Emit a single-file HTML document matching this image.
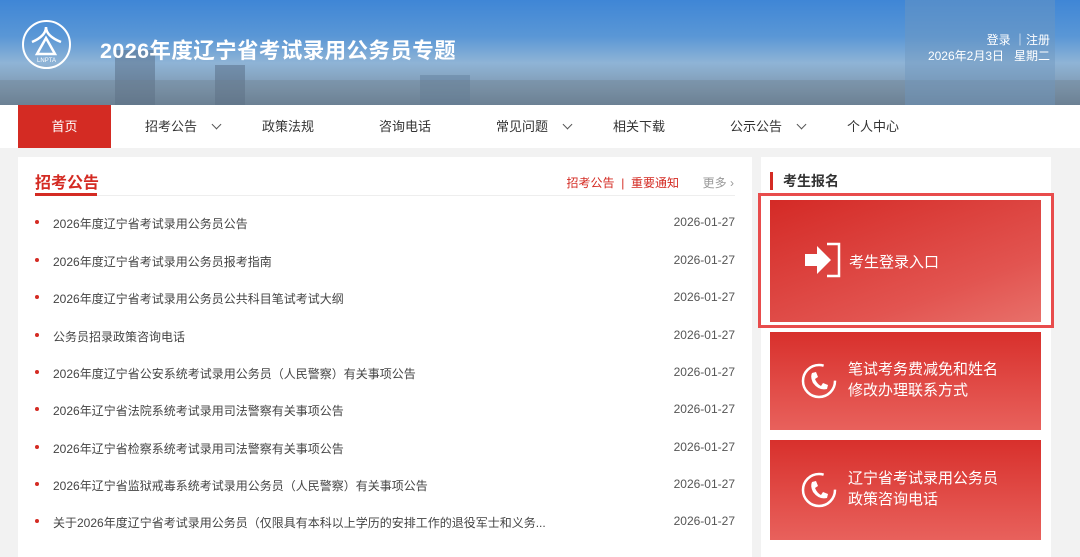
<!DOCTYPE html>
<html><head><meta charset="utf-8"><style>
*{margin:0;padding:0;box-sizing:border-box}
body{width:1080px;height:546px;overflow:hidden;background:#f2f2f2;font-family:"Liberation Sans","Noto Sans CJK SC",sans-serif;position:relative}
.hdr{position:absolute;left:0;top:0;width:1080px;height:105px;background:linear-gradient(180deg,#3f86d6 0%,#5a97d6 35%,#8fb4d6 60%,#7e98b0 85%,#6b8298 100%);overflow:hidden}
.bld{position:absolute;bottom:0;background:rgba(80,100,125,.45)}
.title{position:absolute;left:100px;top:34px;color:#fff;font-size:21.5px;font-weight:bold;letter-spacing:.4px}
.logo{position:absolute;left:22px;top:20px;width:49px;height:49px;border:2px solid #fff;border-radius:50%}
.tr{position:absolute;right:30px;color:#fff;font-size:12px}
.nav{position:absolute;left:0;top:105px;width:1080px;height:43px;background:#fff}
.nav div{position:absolute;top:0;height:43px;line-height:43px;font-size:13px;color:#333}
.nav .on{left:18px;width:93px;background:#d42b23;color:#fff;text-align:center}
.chev{display:inline-block;width:7px;height:7px;border-right:1px solid #555;border-bottom:1px solid #555;transform:rotate(45deg);margin-left:16px;position:relative;top:-3px}
.left{position:absolute;left:18px;top:157px;width:734px;height:400px;background:#fff}
.lt{position:absolute;left:17px;top:12px;font-size:16px;font-weight:bold;color:#d42b23}
.ul{position:absolute;left:17px;top:38px;width:700px;height:1px;background:#eee}
.ulr{position:absolute;left:17px;top:36px;width:62px;height:3px;background:#d42b23}
.links{position:absolute;right:73px;top:17px;font-size:12px;color:#d42b23}
.more{position:absolute;right:18px;top:17px;font-size:12px;color:#999}
.row{position:absolute;left:0;width:734px;font-size:12px;color:#444}
.row .d{position:absolute;left:17px;top:3px;width:4px;height:4px;border-radius:50%;background:#d42b23}
.row .t{position:absolute;left:35px;top:-2px}
.row .dt{position:absolute;right:17px;top:-2px;color:#555}
.right{position:absolute;left:761px;top:157px;width:290px;height:400px;background:#fff}
.rt{position:absolute;left:9px;top:15px;border-left:3px solid #d42b23;padding-left:10px;font-size:14px;font-weight:bold;color:#333;height:18px;line-height:18px}
.card{position:absolute;left:9px;width:271px;background:linear-gradient(180deg,#d8302c,#e8615c);color:#fff;font-size:15px;line-height:21px}
.ol{position:absolute;left:-3px;top:36px;width:296px;height:135px;border:3px solid #e84c4c}
</style></head><body>
<div class="hdr">
<div class="bld" style="left:115px;width:40px;height:55px"></div>
<div class="bld" style="left:215px;width:30px;height:40px"></div>
<div class="bld" style="left:420px;width:50px;height:30px;background:rgba(90,120,150,.4)"></div>
<div class="bld" style="left:0;width:1080px;height:25px;background:rgba(110,125,140,.35)"></div>
<div class="bld" style="left:905px;width:150px;height:105px;background:rgba(110,150,190,.45)"></div>
<div class="logo"><svg width="45" height="45" viewBox="0 0 45 45"><path d="M8 20 Q22 14 22 5 Q22 14 37 20" stroke="#fff" stroke-width="2.5" fill="none"/><path d="M13 32 L22 16 L31 32 Z" stroke="#fff" stroke-width="2.5" fill="none"/><text x="22.5" y="40" font-size="6" fill="#fff" text-anchor="middle" font-family="Liberation Sans">LNPTA</text></svg></div>
<div class="title">2026年度辽宁省考试录用公务员专题</div>
<div class="tr" style="top:31px">登录 ｜注册</div>
<div class="tr" style="top:47px">2026年2月3日&nbsp;&nbsp;&nbsp;星期二</div>
</div>
<div class="nav">
<div class="on">首页</div>
<div style="left:145px">招考公告<span class="chev"></span></div>
<div style="left:262px">政策法规</div>
<div style="left:379px">咨询电话</div>
<div style="left:496px">常见问题<span class="chev"></span></div>
<div style="left:613px">相关下载</div>
<div style="left:730px">公示公告<span class="chev"></span></div>
<div style="left:847px">个人中心</div>
</div>
<div class="left">
<div class="lt">招考公告</div><div class="ul"></div><div class="ulr"></div>
<div class="links">招考公告 &nbsp;|&nbsp; 重要通知</div>
<div class="more">更多 ›</div>
<div class="row" style="top:60px"><span class="d"></span><span class="t">2026年度辽宁省考试录用公务员公告</span><span class="dt">2026-01-27</span></div>
<div class="row" style="top:98px"><span class="d"></span><span class="t">2026年度辽宁省考试录用公务员报考指南</span><span class="dt">2026-01-27</span></div>
<div class="row" style="top:135px"><span class="d"></span><span class="t">2026年度辽宁省考试录用公务员公共科目笔试考试大纲</span><span class="dt">2026-01-27</span></div>
<div class="row" style="top:173px"><span class="d"></span><span class="t">公务员招录政策咨询电话</span><span class="dt">2026-01-27</span></div>
<div class="row" style="top:210px"><span class="d"></span><span class="t">2026年度辽宁省公安系统考试录用公务员（人民警察）有关事项公告</span><span class="dt">2026-01-27</span></div>
<div class="row" style="top:247px"><span class="d"></span><span class="t">2026年辽宁省法院系统考试录用司法警察有关事项公告</span><span class="dt">2026-01-27</span></div>
<div class="row" style="top:285px"><span class="d"></span><span class="t">2026年辽宁省检察系统考试录用司法警察有关事项公告</span><span class="dt">2026-01-27</span></div>
<div class="row" style="top:322px"><span class="d"></span><span class="t">2026年辽宁省监狱戒毒系统考试录用公务员（人民警察）有关事项公告</span><span class="dt">2026-01-27</span></div>
<div class="row" style="top:359px"><span class="d"></span><span class="t">关于2026年度辽宁省考试录用公务员（仅限具有本科以上学历的安排工作的退役军士和义务...</span><span class="dt">2026-01-27</span></div>
</div>
<div class="right">
<div class="rt">考生报名</div>
<div class="ol"></div>
<div class="card" style="top:43px;height:122px;background:linear-gradient(160deg,#d42a26,#e25450 70%,#e8706a)">
<svg style="position:absolute;left:33px;top:42px" width="40" height="36" viewBox="0 0 40 36"><path d="M2 12 H14 V4 L28 18 L14 32 V24 H2 Z" fill="#fff"/><path d="M24 2 H36 V34 H24" stroke="#fff" stroke-width="2.5" fill="none"/></svg>
<span style="position:absolute;left:79px;top:52px">考生登录入口</span></div>
<div class="card" style="top:175px;height:98px">
<svg style="position:absolute;left:31px;top:31px" width="36" height="36" viewBox="0 0 36 36"><circle cx="18" cy="18" r="16" stroke="#fff" stroke-width="2.5" fill="none" stroke-dasharray="80 20"/><path d="M11 10 L15 9 L17 14 L14 16 Q16 21 20 23 L22 20 L27 22 L26 26 Q18 28 12 20 Q9 14 11 10Z" fill="#fff"/></svg>
<span style="position:absolute;left:78px;top:27px">笔试考务费减免和姓名<br>修改办理联系方式</span></div>
<div class="card" style="top:283px;height:100px">
<svg style="position:absolute;left:31px;top:32px" width="36" height="36" viewBox="0 0 36 36"><circle cx="18" cy="18" r="16" stroke="#fff" stroke-width="2.5" fill="none" stroke-dasharray="80 20"/><path d="M11 10 L15 9 L17 14 L14 16 Q16 21 20 23 L22 20 L27 22 L26 26 Q18 28 12 20 Q9 14 11 10Z" fill="#fff"/></svg>
<span style="position:absolute;left:78px;top:28px">辽宁省考试录用公务员<br>政策咨询电话</span></div>
</div>
</body></html>
